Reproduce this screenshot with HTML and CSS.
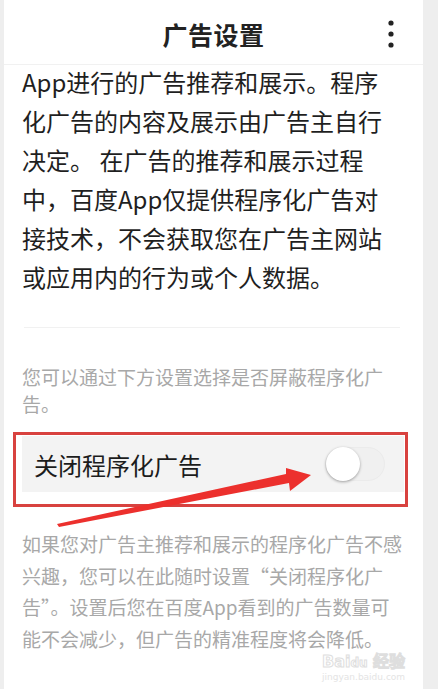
FILE: index.html
```html
<!DOCTYPE html>
<html lang="zh-CN">
<head>
    <meta charset="UTF-8">
    <meta name="viewport" content="width=device-width, initial-scale=1.0">
    <title>广告设置</title>
    <link rel="stylesheet" href="styles.css">
</head>
<body>
    <div class="page">
        <div class="header">
            <span></span>
            <h1 class="title">广告设置</h1>
            <svg class="more" width="6" height="28" viewBox="0 0 6 28">
                <circle cx="3" cy="3" r="2.6" fill="#222"/>
                <circle cx="3" cy="14" r="2.6" fill="#222"/>
                <circle cx="3" cy="25" r="2.6" fill="#222"/>
            </svg>
        </div>

        <p class="intro">
            App进行的广告推荐和展示。程序<br>
            化广告的内容及展示由广告主自行<br>
            决定。 在广告的推荐和展示过程<br>
            中，百度App仅提供程序化广告对<br>
            接技术，不会获取您在广告主网站<br>
            或应用内的行为或个人数据。
        </p>

        <div class="divider"></div>

        <p class="hint">
            您可以通过下方设置选择是否屏蔽程序化广<br>
            告。
        </p>

        <div class="highlight">
            <div class="row">
                <span class="row-label">关闭程序化广告</span>
                <span class="switch"><span class="knob"></span></span>
            </div>
        </div>

        <p class="hint hint-bottom">
            如果您对广告主推荐和展示的程序化广告不感<br>
            兴趣，您可以在此随时设置“关闭程序化广<br>
            告”。设置后您在百度App看到的广告数量可<br>
            能不会减少，但广告的精准程度将会降低。
        </p>
    </div>

    <!-- annotation arrow -->
    <svg class="arrow" width="438" height="689" viewBox="0 0 438 689">
        <polygon points="57,524 286,474 286,468 311,475 290,491 289,483 59,527" fill="#ec302d"/>
    </svg>

    <div class="watermark">
        <span class="wm-logo">Bai<span class="wm-du">du</span> 经验</span>
        <span class="wm-url">jingyan.baidu.com</span>
    </div>
</body>
</html>
```

FILE: styles.css
```css
* { margin: 0; padding: 0; box-sizing: border-box; }
body { position: relative; width: 438px; height: 689px; overflow: hidden; background: #eeeeee; font-family: "Noto Sans CJK SC", "Noto Sans", sans-serif; color: #222; }
.page { width: 419px; height: 689px; margin-left: 4px; background: #fff; }

.header { height: 65px; display: grid; grid-template-columns: 1fr auto 1fr; align-items: center; border-bottom: 1px solid #f1f1f1; padding-top: 4px; }
.title { font-size: 25px; font-weight: bold; color: #222; letter-spacing: 0.5px; }
.more { justify-self: end; margin-right: 29px; margin-top: -1px; }

.intro { padding-left: 18px; margin-top: -3px; font-size: 24px; line-height: 39px; color: #1f1f1f; white-space: nowrap; }

.divider { height: 1px; background: #f1f1f1; margin: 31px 23px 0 20px; }

.hint { padding-left: 18px; margin-top: 35px; font-size: 19px; line-height: 27px; color: #a8a8a8; white-space: nowrap; }
.hint-bottom { margin-top: 21px; line-height: 31.5px; }

.highlight { margin: 15px 15px 0 9px; border: 3px solid #d8423f; padding: 1px 1px 12px 6px; }
.row { height: 56px; background: #f3f3f3; display: flex; align-items: center; justify-content: space-between; padding: 0 19px 0 12px; }
.row-label { font-size: 24px; color: #1c1c1c; }
.switch { position: relative; width: 60px; height: 34px; border-radius: 17px; background: #f0f0f0; border: 1px solid #ebebeb; }
.knob { position: absolute; left: 0; top: -1px; width: 34px; height: 34px; border-radius: 50%; background: #fff; box-shadow: 0 1px 3px rgba(0, 0, 0, 0.35); }

.arrow { position: absolute; left: 0; top: 0; pointer-events: none; }

.watermark { position: absolute; left: 322px; top: 653px; display: flex; flex-direction: column; align-items: center; pointer-events: none; }
.wm-logo { font-family: "DejaVu Sans", sans-serif; font-size: 16px; font-weight: bold; line-height: 18px; color: #fff; -webkit-text-stroke: 1px #dedede; }
.wm-du { font-size: 12px; }
.wm-url { font-family: "DejaVu Sans", sans-serif; font-size: 9px; line-height: 11px; color: #e4e4e4; }
```
